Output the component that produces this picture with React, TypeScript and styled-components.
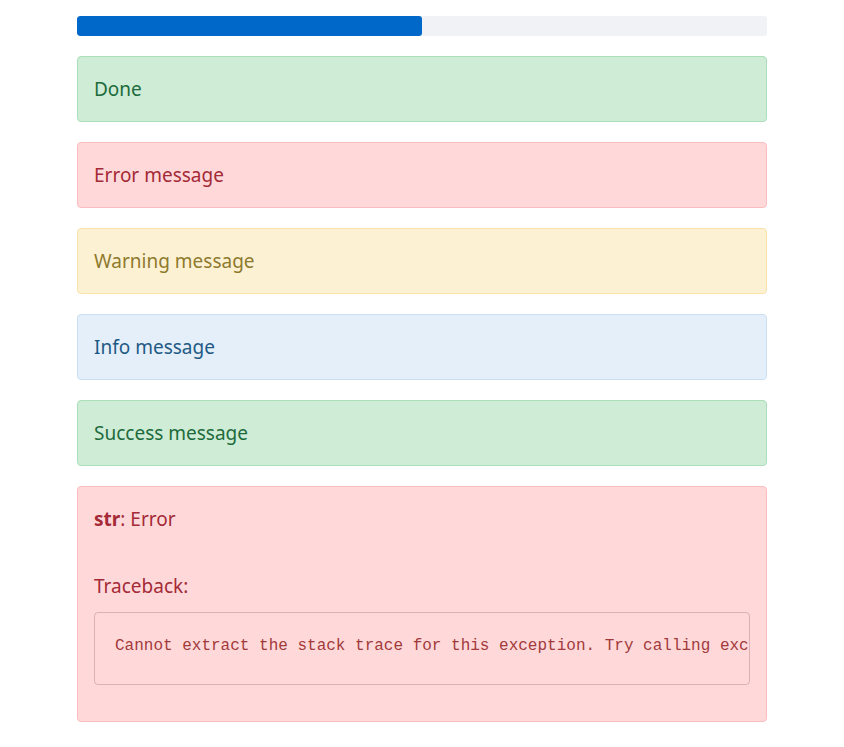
import React from "react";
import styled, { createGlobalStyle, css } from "styled-components";

const Global = createGlobalStyle`
  html, body { margin: 0; padding: 0; background: #ffffff; }
  body { font-family: "Noto Sans", "Open Sans", sans-serif; }
`;

const Page = styled.main`
  width: 690px;
  margin: 0 auto;
  padding: 16px 0 24px;
  display: flex;
  flex-direction: column;
  gap: 20px;
`;

const ProgressTrack = styled.div`
  height: 20px;
  background: #f0f2f6;
  border-radius: 3px;
  overflow: hidden;
  display: flex;
`;

const ProgressFill = styled.div`
  height: 100%;
  background: #0068c9;
  border-radius: 3px;
`;

type Kind = "success" | "error" | "warning" | "info";

const palette: Record<Kind, { bg: string; border: string; fg: string }> = {
  success: { bg: "#cfecd7", border: "#abdfba", fg: "#1d6b3c" },
  error: { bg: "#ffd9da", border: "#fbbcbf", fg: "#a42a37" },
  warning: { bg: "#fdf1d4", border: "#f9e3a8", fg: "#8e7a2d" },
  info: { bg: "#e4effa", border: "#cadff3", fg: "#1f5a85" },
};

const Alert = styled.div<{ $kind: Kind }>`
  ${({ $kind }) => css`
    background: ${palette[$kind].bg};
    border: 1px solid ${palette[$kind].border};
    color: ${palette[$kind].fg};
  `}
  border-radius: 4px;
  padding: 20px 16px;
  font-size: 19px;
  line-height: 24px;
`;

const ExceptionBox = styled(Alert)`
  padding: 20px 16px 36px;
  display: flex;
  flex-direction: column;
`;

const Line = styled.div`
  margin: 0;
`;

const TraceTitle = styled.div`
  margin-top: 43px;
  margin-bottom: 14px;
`;

const Strong = styled.strong`
  font-weight: 700;
`;

const CodeBlock = styled.pre`
  margin: 0;
  border: 1px solid rgba(120, 60, 60, 0.25);
  border-radius: 4px;
  padding: 22px 20px 26px;
  overflow: hidden;
  white-space: pre;
  font-family: "Liberation Mono", "DejaVu Sans Mono", monospace;
  font-size: 16px;
  line-height: 23px;
  color: #a23a3a;
`;

export default function App() {
  return (
    <>
      <Global />
      <Page>
        <ProgressTrack>
          <ProgressFill style={{ width: "50%" }} />
        </ProgressTrack>
        <Alert $kind="success">Done</Alert>
        <Alert $kind="error">Error message</Alert>
        <Alert $kind="warning">Warning message</Alert>
        <Alert $kind="info">Info message</Alert>
        <Alert $kind="success">Success message</Alert>
        <ExceptionBox $kind="error">
          <Line>
            <Strong>str</Strong>: Error
          </Line>
          <TraceTitle>Traceback:</TraceTitle>
          <CodeBlock>
            Cannot extract the stack trace for this exception. Try calling exc
          </CodeBlock>
        </ExceptionBox>
      </Page>
    </>
  );
}
